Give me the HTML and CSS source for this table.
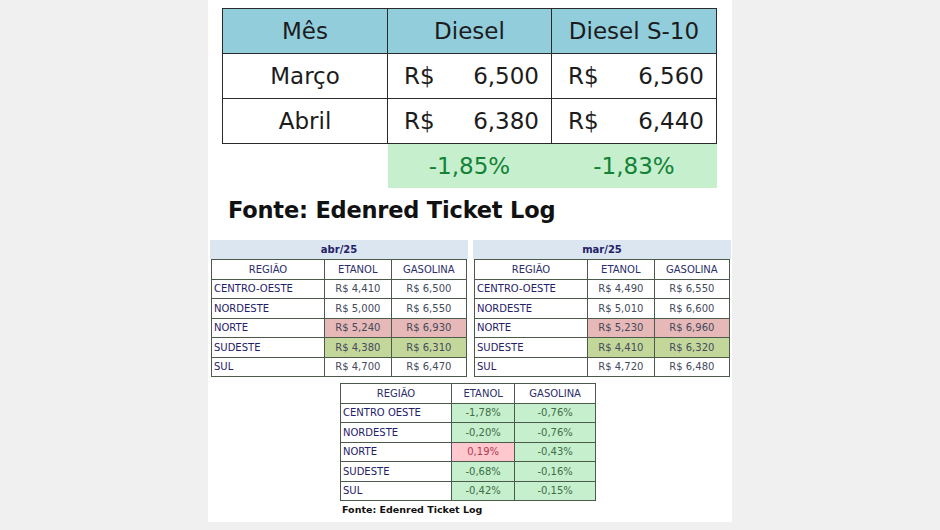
FILE: index.html
```
<!DOCTYPE html>
<html lang="pt-BR">
<head>
    <meta charset="UTF-8">
    <meta name="viewport" content="width=device-width, initial-scale=1.0">
    <title>Preço do Diesel</title>
    <link rel="stylesheet" href="styles.css">
</head>
<body>
    <div class="sheet">
        <table class="diesel">
            <tr class="head">
                <th>Mês</th>
                <th>Diesel</th>
                <th>Diesel S-10</th>
            </tr>
            <tr>
                <td class="month">Março</td>
                <td><div class="price"><span>R$</span><span>6,500</span></div></td>
                <td><div class="price"><span>R$</span><span>6,560</span></div></td>
            </tr>
            <tr>
                <td class="month">Abril</td>
                <td><div class="price"><span>R$</span><span>6,380</span></div></td>
                <td><div class="price"><span>R$</span><span>6,440</span></div></td>
            </tr>
            <tr class="change">
                <td class="blank"></td>
                <td>-1,85%</td>
                <td>-1,83%</td>
            </tr>
        </table>

        <div class="source big">Fonte: Edenred Ticket Log</div>

        <div class="months">
            <div class="month-box">
                <div class="band">abr/25</div>
                <table class="region">
                    <tr><th>REGIÃO</th><th>ETANOL</th><th>GASOLINA</th></tr>
                    <tr><td>CENTRO-OESTE</td><td>R$ 4,410</td><td>R$ 6,500</td></tr>
                    <tr><td>NORDESTE</td><td>R$ 5,000</td><td>R$ 6,550</td></tr>
                    <tr class="high"><td>NORTE</td><td>R$ 5,240</td><td>R$ 6,930</td></tr>
                    <tr class="low"><td>SUDESTE</td><td>R$ 4,380</td><td>R$ 6,310</td></tr>
                    <tr><td>SUL</td><td>R$ 4,700</td><td>R$ 6,470</td></tr>
                </table>
            </div>
            <div class="month-box">
                <div class="band">mar/25</div>
                <table class="region">
                    <tr><th>REGIÃO</th><th>ETANOL</th><th>GASOLINA</th></tr>
                    <tr><td>CENTRO-OESTE</td><td>R$ 4,490</td><td>R$ 6,550</td></tr>
                    <tr><td>NORDESTE</td><td>R$ 5,010</td><td>R$ 6,600</td></tr>
                    <tr class="high"><td>NORTE</td><td>R$ 5,230</td><td>R$ 6,960</td></tr>
                    <tr class="low"><td>SUDESTE</td><td>R$ 4,410</td><td>R$ 6,320</td></tr>
                    <tr><td>SUL</td><td>R$ 4,720</td><td>R$ 6,480</td></tr>
                </table>
            </div>
        </div>

        <div class="variation">
            <table class="region pct">
                <tr><th>REGIÃO</th><th>ETANOL</th><th>GASOLINA</th></tr>
                <tr><td>CENTRO OESTE</td><td class="down">-1,78%</td><td class="down">-0,76%</td></tr>
                <tr><td>NORDESTE</td><td class="down">-0,20%</td><td class="down">-0,76%</td></tr>
                <tr><td>NORTE</td><td class="up">0,19%</td><td class="down">-0,43%</td></tr>
                <tr><td>SUDESTE</td><td class="down">-0,68%</td><td class="down">-0,16%</td></tr>
                <tr><td>SUL</td><td class="down">-0,42%</td><td class="down">-0,15%</td></tr>
            </table>
            <div class="source small">Fonte: Edenred Ticket Log</div>
        </div>
    </div>
</body>
</html>
```
FILE: styles.css
```
body {
    margin: 0;
    background-color: #f0f0f0;
    font-family: "DejaVu Sans", sans-serif;
}
.sheet {
    width: 524px;
    height: 522px;
    margin-left: 208px;
    background-color: #fff;
    padding-top: 8px;
    box-sizing: border-box;
}

/* Diesel table */
.diesel {
    border-collapse: collapse;
    margin-left: 14px;
    width: 495px;
    font-size: 23px;
    color: #1c1c1c;
}
.diesel th,
.diesel td {
    border: 1px solid #2a2a2a;
    height: 44px;
    padding: 0;
    font-weight: normal;
}
.diesel th {
    background-color: #92cddc;
}
.diesel th:first-child,
.diesel td:first-child {
    width: 164px;
}
.diesel th:nth-child(2) {
    width: 163px;
}
.diesel .month {
    text-align: center;
}
.price {
    display: flex;
    justify-content: space-between;
    padding: 0 12px 0 16px;
}
.diesel .change td {
    border: none;
    background-color: #c6efce;
    color: #138236;
    text-align: center;
}
.diesel .change .blank {
    background-color: #fff;
}

/* Source line */
.source {
    font-weight: bold;
    color: #111;
}
.source.big {
    font-size: 22.5px;
    letter-spacing: -0.2px;
    margin: 9px 0 0 20px;
    height: 43px;
}
.source.small {
    font-size: 9.5px;
    margin: 3px 0 0 2px;
}

/* Monthly tables */
.months {
    display: flex;
    gap: 5px;
    padding-left: 2px;
}
.month-box {
    width: 258px;
}
.band {
    background-color: #dce6f1;
    color: #1f2168;
    font-weight: bold;
    font-size: 10px;
    text-align: center;
    height: 19px;
    line-height: 19px;
}
.region {
    border-collapse: collapse;
    width: 256px;
    font-size: 10px;
    color: #1f2168;
}
.month-box .region {
    margin-left: 1px;
}
.region th,
.region td {
    border: 1px solid #4b5a4b;
    height: 18.5px;
    padding: 0 2px;
    font-weight: normal;
}
.region th {
    color: #2a2e6a;
    text-align: center;
}
.region th:first-child {
    width: 108px;
}
.region td:nth-child(n+2) {
    text-align: center;
    color: #444a5c;
}
.region .high td:nth-child(n+2) {
    background-color: #e6b8b7;
}
.region .low td:nth-child(n+2) {
    background-color: #c4d79b;
}

/* Variation table */
.variation {
    margin: 6px 0 0 132px;
}
.region.pct {
    width: 256px;
}
.region.pct th:first-child {
    width: 106px;
}
.region.pct td.down {
    background-color: #c6efce;
    color: #3d6e45;
}
.region.pct td.up {
    background-color: #ffc7ce;
    color: #b1384e;
}
```
